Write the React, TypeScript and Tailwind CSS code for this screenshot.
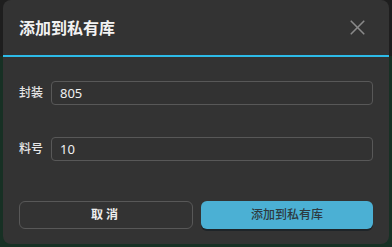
import { X } from "lucide-react";

const font = { fontFamily: '"Noto Sans", "Noto Sans CJK SC", sans-serif' };

const fields = [
  { label: "封装", value: "805" },
  { label: "料号", value: "10" },
];

export default function App() {
  return (
    <div className="relative w-[392px] h-[247px] overflow-hidden bg-[#17291f]" style={font}>
      {/* backdrop */}
      <div className="h-[56px] bg-[#1e1e1e]" />
      <div className="h-[191px] bg-[#173024]" />

      {/* dialog */}
      <div className="absolute left-[3px] top-0 w-[386px] h-[244px] rounded-[8px] bg-[#333333] flex flex-col">
        <div className="h-[55px] flex items-center justify-between pl-4 pr-[19px]">
          <h2 className="text-[16px] font-bold text-[#f2f2f2] leading-none">添加到私有库</h2>
          <X size={25} strokeWidth={1.6} className="text-[#8a8a8a]" />
        </div>
        <div className="h-[2px] bg-[#2dbbe8]" />

        <div className="flex flex-col gap-8 px-4 pt-[24px]">
          {fields.map((f) => (
            <div key={f.label} className="flex items-center gap-2">
              <span className="w-[24px] text-[12px] font-medium text-[#e6e6e6] leading-none">{f.label}</span>
              <div className="flex-1 h-[24px] flex items-center px-2 rounded-[4px] border border-[#585858] bg-[#323232]">
                <span className="text-[13px] text-[#f0f0f0] leading-none">{f.value}</span>
              </div>
            </div>
          ))}
        </div>

        <div className="flex gap-2 px-4 mt-[40px]">
          <button className="flex-1 h-[28px] rounded-[6px] border border-[#585858] text-[12px] font-semibold text-[#eeeeee] tracking-[3px]">
            取消
          </button>
          <button className="flex-1 h-[28px] rounded-[6px] bg-[#4bb0d4] text-[12px] font-medium text-[#2e3a40] shadow-[0_2px_0_#1e2428]">
            添加到私有库
          </button>
        </div>
      </div>
    </div>
  );
}
